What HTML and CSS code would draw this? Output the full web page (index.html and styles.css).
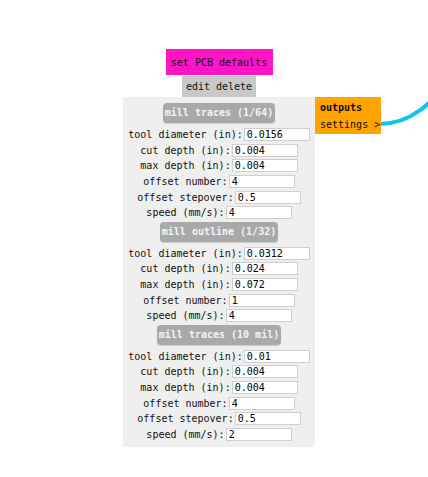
FILE: index.html
```html
<!DOCTYPE html>
<html>
<head>
<meta charset="utf-8">
<link rel="stylesheet" href="styles.css">
</head>
<body>
<div class="canvas">
  <svg class="link" width="428" height="477" viewBox="0 0 428 477">
    <path d="M380,124 C420,124 440,90 470,60" fill="none" stroke="#0ec4f4" stroke-width="4"/>
  </svg>

  <div class="module">
    <div class="title">set PCB defaults</div>
    <div class="edit">edit delete</div>
    <div class="panel">
      <div class="btn">mill traces (1/64)</div>
      <div class="row"><span>tool diameter (in):</span><input type="text" value="0.0156"></div>
      <div class="row"><span>cut depth (in):</span><input type="text" value="0.004"></div>
      <div class="row"><span>max depth (in):</span><input type="text" value="0.004"></div>
      <div class="row"><span>offset number:</span><input type="text" value="4"></div>
      <div class="row"><span>offset stepover:</span><input type="text" value="0.5"></div>
      <div class="row"><span>speed (mm/s):</span><input type="text" value="4"></div>

      <div class="btn">mill outline (1/32)</div>
      <div class="row"><span>tool diameter (in):</span><input type="text" value="0.0312"></div>
      <div class="row"><span>cut depth (in):</span><input type="text" value="0.024"></div>
      <div class="row"><span>max depth (in):</span><input type="text" value="0.072"></div>
      <div class="row"><span>offset number:</span><input type="text" value="1"></div>
      <div class="row"><span>speed (mm/s):</span><input type="text" value="4"></div>

      <div class="btn">mill traces (10 mil)</div>
      <div class="row"><span>tool diameter (in):</span><input type="text" value="0.01"></div>
      <div class="row"><span>cut depth (in):</span><input type="text" value="0.004"></div>
      <div class="row"><span>max depth (in):</span><input type="text" value="0.004"></div>
      <div class="row"><span>offset number:</span><input type="text" value="4"></div>
      <div class="row"><span>offset stepover:</span><input type="text" value="0.5"></div>
      <div class="row"><span>speed (mm/s):</span><input type="text" value="2"></div>
    </div>
  </div>

  <div class="outputs">
    <div class="out-title">outputs</div>
    <div class="out-item">settings &gt;</div>
  </div>
</div>
</body>
</html>
```

FILE: styles.css
```css
html, body {
  margin: 0;
  padding: 0;
  background: #ffffff;
}

body {
  font-family: "DejaVu Sans Mono", monospace;
  font-size: 10px;
  color: #111;
}

.canvas {
  position: relative;
  width: 428px;
  height: 477px;
  overflow: hidden;
}

.link {
  position: absolute;
  left: 0;
  top: 0;
}

.module {
  position: absolute;
  left: 123px;
  top: 49px;
  width: 192px;
  display: flex;
  flex-direction: column;
  align-items: center;
}

.title {
  background: #ff14c6;
  width: 107px;
  height: 26px;
  display: flex;
  align-items: center;
  justify-content: center;
}

.edit {
  background: #c8c8c8;
  margin-top: 1px;
  width: 74px;
  height: 21px;
  display: flex;
  align-items: center;
  justify-content: center;
}

.panel {
  align-self: stretch;
  background: #efefef;
  padding: 5px 0 5px;
  display: flex;
  flex-direction: column;
  align-items: center;
}

.btn {
  background: #a9a9a9;
  color: #f4f4f4;
  font-weight: bold;
  border-radius: 4px;
  height: 20px;
  line-height: 20px;
  padding: 0 2px;
  margin: 1px 0 4px;
  box-shadow: 0 1px 1px rgba(0, 0, 0, 0.15);
}

.row {
  display: flex;
  align-items: center;
  gap: 1px;
  height: 15.6px;
}

.row input {
  width: 66px;
  height: 13px;
  box-sizing: border-box;
  border: 1px solid #cfcfcf;
  background: #fff;
  font-family: "DejaVu Sans Mono", monospace;
  font-size: 10px;
  color: #000;
  padding: 0 2px;
  margin: 0;
}

.outputs {
  position: absolute;
  left: 315px;
  top: 97px;
  width: 66px;
  height: 37px;
  box-sizing: border-box;
  background: #ffa300;
  padding: 2px 0 0 5px;
}

.out-title {
  font-weight: bold;
  height: 17px;
  line-height: 17px;
}

.out-item {
  height: 17px;
  line-height: 17px;
}
```
